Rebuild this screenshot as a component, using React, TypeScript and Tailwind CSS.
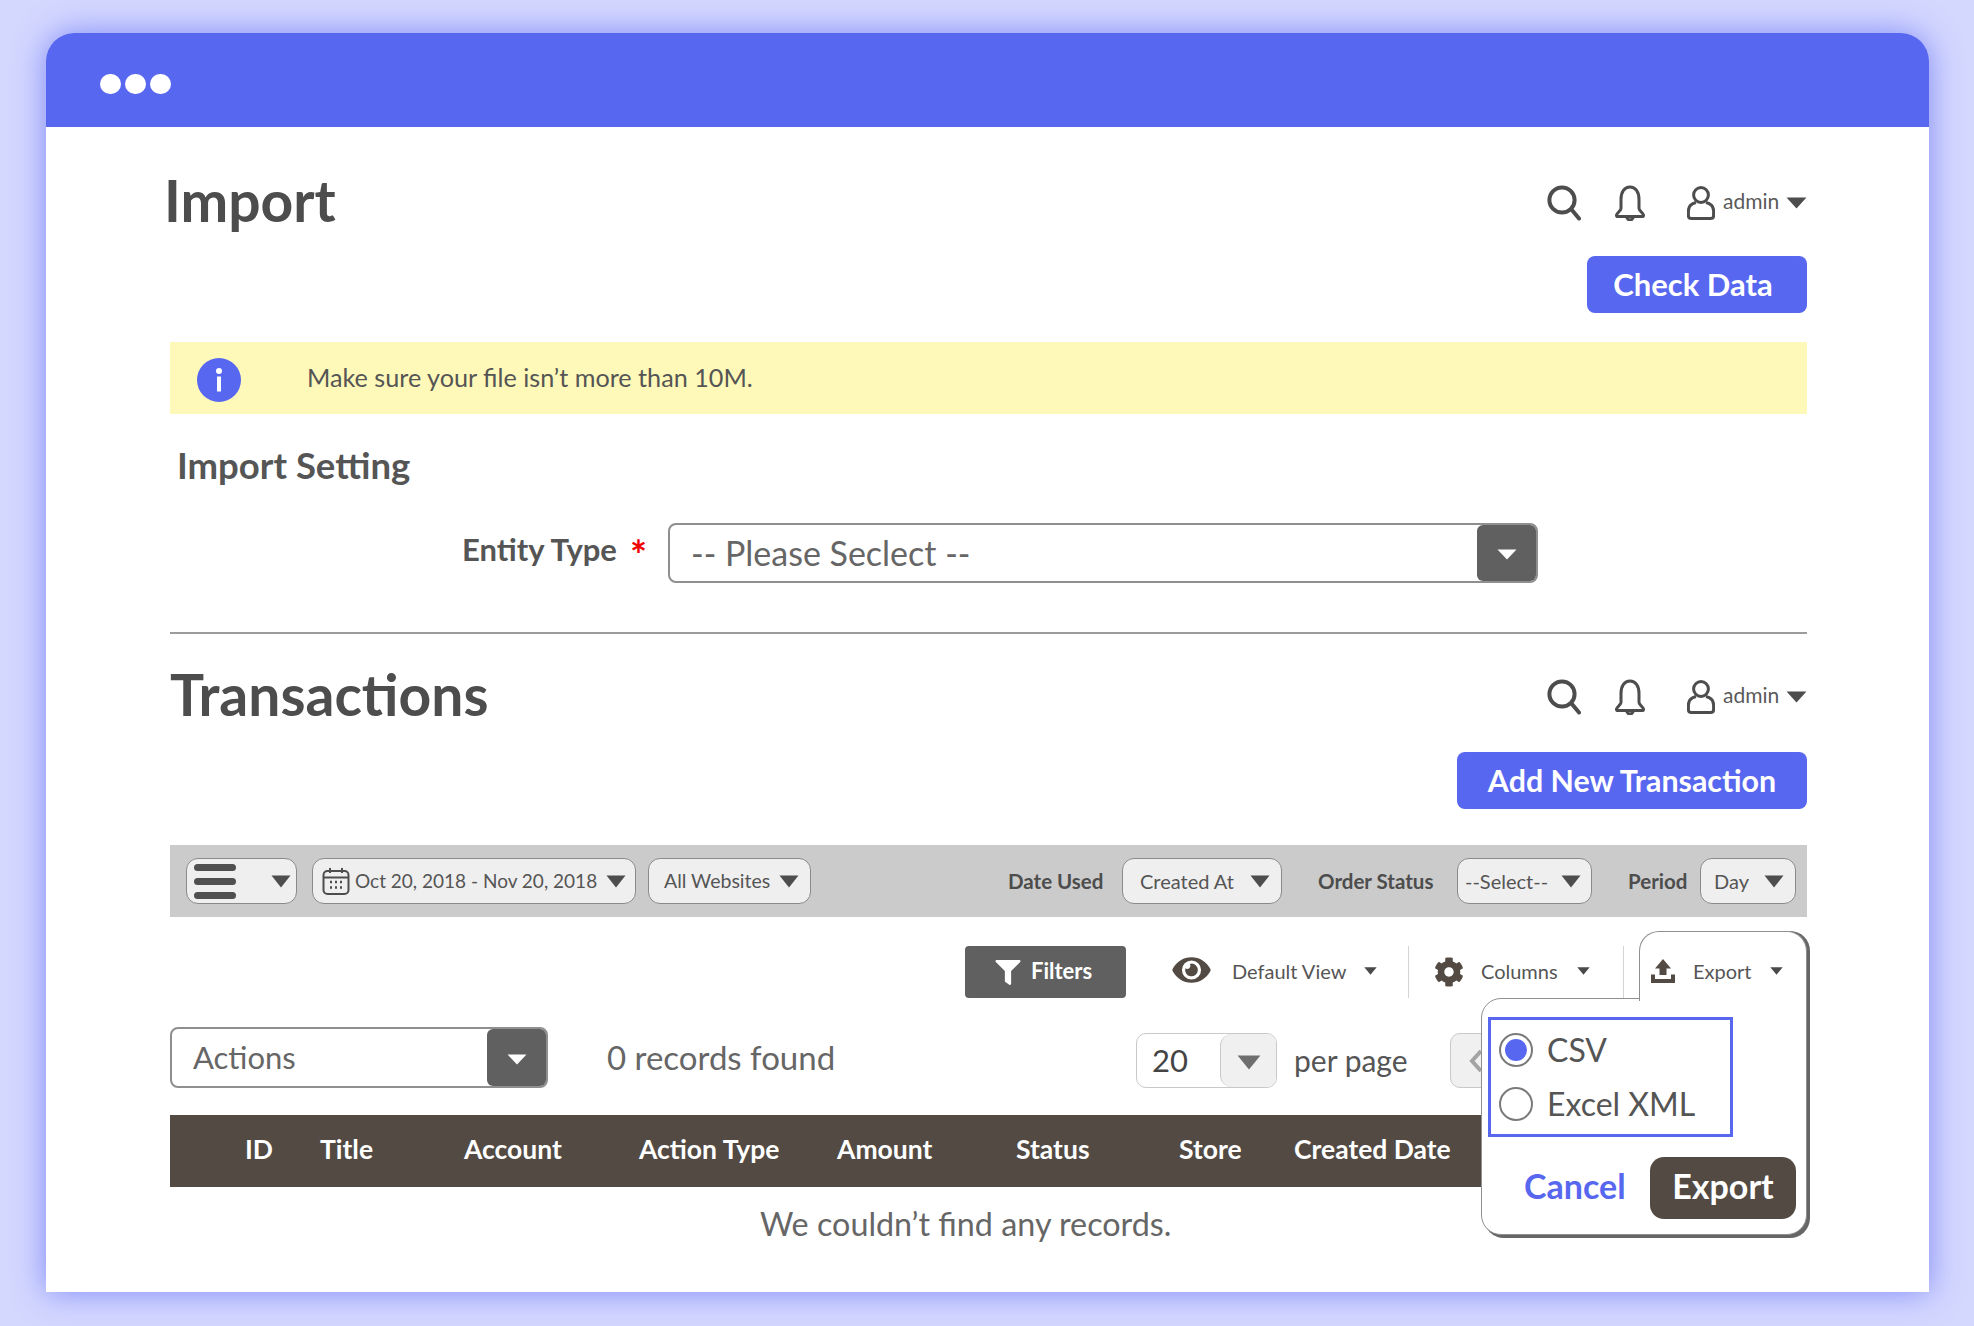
import { FaCog, FaEye, FaFilter } from "react-icons/fa";

function Caret({ className }: { className: string }) {
  return (
    <svg viewBox="0 0 20 13" className={className} fill="currentColor" preserveAspectRatio="none">
      <path d="M0.5 0.5h19L10 12.5z" />
    </svg>
  );
}

function TopIcons() {
  return (
    <div className="flex items-center text-[#4d4d4d]">
      <svg viewBox="0 0 34 36" className="w-[34px] h-[36px]" fill="none" stroke="currentColor" strokeWidth="4" strokeLinecap="round">
        <circle cx="15" cy="15" r="12.600" />
        <path d="M24.500 24.500 32 33.500" />
      </svg>
      <svg viewBox="0 0 32 36" className="w-[32px] h-[36px] ml-[33px]" fill="none" stroke="currentColor" strokeWidth="3" strokeLinejoin="round">
        <path d="M7 14.500C7 7 10.500 2 16 2s9 5 9 12.500v9c0 2 4 4.500 4.500 6.500.2 1-.3 1.500-1.300 1.500H3.800c-1 0-1.500-.5-1.300-1.500C3 28 7 25.500 7 23.500z" />
        <path d="M12.500 31.500c.5 2.500 2 3.500 3.500 3.500s3-1 3.500-3.500" />
      </svg>
      <svg viewBox="0 0 28 34" className="w-[28px] h-[34px] ml-[41px]" fill="none" stroke="currentColor" strokeWidth="3">
        <circle cx="14" cy="9" r="7.400" />
        <path d="M9 16.500C4.500 17.500 1.400 20.500 1.400 25v4.500c0 2 1 3 3 3h19.200c2 0 3-1 3-3V25c0-4.500-3.100-7.500-7.600-8.500" />
      </svg>
      <span className="ml-[8px] mb-[4px] text-[21px] text-[#5a5a5a] w-[63px]">admin</span>
      <Caret className="w-[21px] h-[12px]" />
    </div>
  );
}

function PurpleButton({ label, className }: { label: string; className: string }) {
  return (
    <div className="flex justify-end">
      <button className={`h-[57px] rounded-[8px] bg-[#5867f0] text-white font-bold ${className}`}>{label}</button>
    </div>
  );
}

function DarkSelect({ label, className, text }: { label: string; className: string; text: string }) {
  return (
    <div className={`flex items-stretch rounded-[8px] border-2 border-[#8f8f8f] bg-white overflow-hidden ${className}`}>
      <span className={`flex-1 pl-[21px] flex items-center text-[#666] ${text}`}>{label}</span>
      <span className="w-[59px] bg-[#606060] flex items-center justify-center rounded-l-[6px]">
        <Caret className="w-[20px] h-[11px] text-white mt-[3px]" />
      </span>
    </div>
  );
}

function ToolSelect({ children, className }: { children: React.ReactNode; className: string }) {
  return (
    <div className={`h-[46px] rounded-[12px] border border-[#8a8a8a] bg-[#efefef] flex items-center text-[#555] text-[20px] shrink-0 ${className}`}>
      {children}
    </div>
  );
}

const columns = ["ID", "Title", "Account", "Action Type", "Amount", "Status", "Store", "Created Date"];

function ExportPopup() {
  return (
    <div className="absolute right-0 top-[-15px] w-[326px] h-[304px] z-10 text-[#555]">
      <div className="absolute right-0 top-0 w-[168px] h-[70px] z-20 bg-white rounded-t-[20px] border border-b-0 border-[#8f8f8f] shadow-[3px_0_0_#666] flex items-center pl-[11px] pt-[9px]">
        <svg viewBox="0 0 24 24" className="w-[24px] h-[24px] text-[#524a43] mb-[1px]" fill="currentColor">
          <path d="M12 0 20 9.500H15.500V16H8.500V9.500H4z" />
          <path d="M0 15.500H4V20H20V15.500H24V24H0z" />
        </svg>
        <span className="ml-[18px] text-[20px]">Export</span>
        <Caret className="w-[13px] h-[8px] ml-[18px] text-[#4a4a4a]" />
      </div>
      <div className="absolute left-0 top-[67px] w-[326px] h-[237px] bg-white rounded-[20px] rounded-tr-none border border-[#8f8f8f] shadow-[3px_3px_0_#666] flex flex-col pl-[6px] pt-[18px]">
        <div className="w-[245px] h-[120px] border-[3px] border-[#5867f0] flex flex-col justify-center gap-[20px] pl-[8px] text-[32px]">
          <div className="flex items-center h-[34px]">
            <span className="w-[34px] h-[34px] rounded-full border-2 border-[#7a7a7a] flex items-center justify-center">
              <span className="w-[22px] h-[22px] rounded-full bg-[#5867f0]" />
            </span>
            <span className="ml-[14px]">CSV</span>
          </div>
          <div className="flex items-center h-[34px]">
            <span className="w-[34px] h-[34px] rounded-full border-2 border-[#7a7a7a]" />
            <span className="ml-[14px]">Excel XML</span>
          </div>
        </div>
        <div className="flex items-center mt-[20px]">
          <span className="ml-[36px] w-[126px] mb-[6px] text-[34px] font-bold text-[#5867f0]">Cancel</span>
          <button className="w-[146px] h-[62px] pb-[6px] rounded-[14px] bg-[#524a43] text-white text-[34px] font-bold">Export</button>
        </div>
      </div>
    </div>
  );
}

export default function App() {
  return (
    <div className="w-[1974px] h-[1326px] bg-[#d4d7fe] pt-[33px] pl-[46px] font-[Lato,sans-serif] overflow-hidden">
      <div className="w-[1883px] h-[1259px] bg-white rounded-t-[28px] shadow-[0_0_32px_#7f8af8]">
        <div className="h-[94px] bg-[#5867f0] rounded-t-[28px] flex items-center gap-[4px] pl-[54px] pt-[8px]">
          <span className="w-[21px] h-[20px] rounded-full bg-white" />
          <span className="w-[21px] h-[20px] rounded-full bg-white" />
          <span className="w-[21px] h-[20px] rounded-full bg-white" />
        </div>

        <div className="pl-[124px] pr-[122px] pt-[43px]">
          <div className="h-[66px] flex items-center justify-between">
            <h1 className="text-[57px] font-bold text-[#4d4d4d] -ml-[6px] mb-[5px]">Import</h1>
            <TopIcons />
          </div>
          <div className="mt-[20px]">
            <PurpleButton label="Check Data" className="w-[220px] pr-[8px] text-[31px]" />
          </div>

          <div className="mt-[29px] h-[72px] bg-[#fef9b9] flex items-center pl-[27px] text-[#555]">
            <svg viewBox="0 0 44 44" className="w-[44px] h-[44px] mt-[3px]">
              <circle cx="22" cy="22" r="22" fill="#5867f0" />
              <circle cx="22" cy="13" r="3" fill="#fff" />
              <rect x="20" y="18.500" width="4" height="15" fill="#fff" />
            </svg>
            <span className="ml-[66px] text-[25.2px]">Make sure your file isn’t more than 10M.</span>
          </div>

          <h2 className="mt-[31px] h-[44px] flex items-center ml-[7px] pb-[4px] text-[36.5px] font-bold text-[#555]">Import Setting</h2>

          <div className="mt-[34px] h-[60px] flex items-center">
            <span className="ml-[292px] w-[168px] mb-[7px] text-[31px] font-bold text-[#555]">Entity Type</span>
            <span className="w-[38px] text-[40px] leading-none font-bold text-[#f00000] mt-[3px]">*</span>
            <DarkSelect label="-- Please Seclect --" className="w-[870px] h-[60px]" text="text-[34px] pb-[2px]" />
          </div>

          <div className="mt-[49px] h-[2px] bg-[#9c9c9c]" />

          <div className="mt-[30px] h-[66px] flex items-center justify-between">
            <h1 className="text-[57px] font-bold text-[#4d4d4d] mb-[5px]">Transactions</h1>
            <TopIcons />
          </div>
          <div className="mt-[22px]">
            <PurpleButton label="Add New Transaction" className="w-[350px] text-[30.4px]" />
          </div>

          <div className="mt-[36px] h-[72px] bg-[#cbcbcb] flex items-center pl-[16px] pr-[11px]">
            <ToolSelect className="w-[111px] pl-[7px]">
              <span className="w-[42px] flex flex-col gap-[7px]">
                <span className="h-[7px] rounded-full bg-[#505050]" />
                <span className="h-[7px] rounded-full bg-[#505050]" />
                <span className="h-[7px] rounded-full bg-[#505050]" />
              </span>
              <Caret className="w-[20px] h-[13px] ml-[35px] text-[#4d4d4d]" />
            </ToolSelect>
            <ToolSelect className="w-[324px] ml-[15px] pl-[9px]">
              <svg viewBox="0 0 28 28" className="w-[28px] h-[28px] text-[#4d4d4d]" fill="none" stroke="currentColor" strokeWidth="2">
                <rect x="1.500" y="4" width="25" height="23" rx="4" />
                <path d="M1.500 10.500h25M8 1v5M20 1v5" />
                <path d="M8 15h2M13 15h2M18 15h2M8 20.500h2M13 20.500h2M18 20.500h2" strokeWidth="2.400" />
              </svg>
              <span className="ml-[5px] w-[251px] text-[19px] whitespace-nowrap">Oct 20, 2018 - Nov 20, 2018</span>
              <Caret className="w-[20px] h-[13px] text-[#4d4d4d]" />
            </ToolSelect>
            <ToolSelect className="w-[163px] ml-[12px] pl-[15px]">
              <span className="w-[115px] text-[19.5px]">All Websites</span>
              <Caret className="w-[20px] h-[13px] text-[#4d4d4d]" />
            </ToolSelect>

            <span className="ml-auto w-[114px] text-[20.5px] font-bold text-[#4d4d4d]">Date Used</span>
            <ToolSelect className="w-[160px] pl-[17px]">
              <span className="w-[110px]">Created At</span>
              <Caret className="w-[20px] h-[13px] text-[#4d4d4d]" />
            </ToolSelect>
            <span className="ml-[36px] w-[139px] text-[20.5px] font-bold text-[#4d4d4d]">Order Status</span>
            <ToolSelect className="w-[135px] pl-[7px]">
              <span className="w-[96px]">--Select--</span>
              <Caret className="w-[20px] h-[13px] text-[#4d4d4d]" />
            </ToolSelect>
            <span className="ml-[36px] w-[72px] text-[20.5px] font-bold text-[#4d4d4d]">Period</span>
            <ToolSelect className="w-[96px] pl-[13px]">
              <span className="w-[50px]">Day</span>
              <Caret className="w-[20px] h-[13px] text-[#4d4d4d]" />
            </ToolSelect>
          </div>

          <div className="relative mt-[29px] h-[52px] flex items-center text-[#555] text-[20px]">
            <button className="ml-[795px] w-[161px] h-[52px] rounded-[4px] bg-[#606060] text-white text-[22px] font-bold flex items-center pl-[29px]">
              <FaFilter className="w-[28px] h-[25px]" />
              <span className="ml-[9px] mb-[3px]">Filters</span>
            </button>
            <FaEye className="ml-[46px] w-[39px] h-[34px] text-[#524a43] mb-[5px]" />
            <span className="ml-[21px] w-[132px] mb-[3px]">Default View</span>
            <Caret className="w-[13px] h-[8px] text-[#4a4a4a] mb-[2px]" />
            <span className="ml-[31px] w-px h-[52px] bg-[#d4d4d4]" />
            <FaCog className="ml-[25px] w-[30px] h-[30px] text-[#524a43]" />
            <span className="ml-[17px] w-[96px] mb-[3px]">Columns</span>
            <Caret className="w-[13px] h-[8px] text-[#4a4a4a] mb-[2px]" />
            <span className="ml-[33px] w-px h-[52px] bg-[#d4d4d4]" />
            <ExportPopup />
          </div>

          <div className="mt-[29px] h-[61px] flex items-center">
            <DarkSelect label="Actions" className="w-[378px] h-[61px]" text="text-[31px]" />
            <span className="ml-[59px] w-[228px] whitespace-nowrap text-[33px] text-[#666]">0 records found</span>
            <div className="ml-[301px] mt-[6px] w-[141px] h-[55px] rounded-[10px] border border-[#c9c9c9] flex items-stretch overflow-hidden">
              <span className="flex-1 pl-[15px] flex items-center text-[31px] text-[#444]">20</span>
              <span className="w-[56px] bg-[#f0f0f0] border-l border-[#c9c9c9] rounded-l-[12px] flex items-center justify-center">
                <Caret className="w-[24px] h-[15px] text-[#6e6e6e] mt-[4px]" />
              </span>
            </div>
            <span className="ml-[17px] w-[156px] mt-[6px] text-[30px] text-[#555]">per page</span>
            <div className="mt-[6px] w-[60px] h-[55px] rounded-[10px] border border-[#c9c9c9] bg-[#f0f0f0] flex items-center pl-[18px]">
              <svg viewBox="0 0 14 24" className="w-[14px] h-[24px]" fill="none" stroke="#a3a3a3" strokeWidth="4">
                <path d="M12 2 3 12l9 10" />
              </svg>
            </div>
          </div>

          <div className="mt-[27px] h-[72px] bg-[#524a43] text-white text-[26.5px] font-bold pl-[75px] pb-[3px] grid grid-cols-[75px_144px_175px_198px_179px_163px_115px_1fr] items-center">
            {columns.map((col) => (
              <span key={col} className="whitespace-nowrap">{col}</span>
            ))}
          </div>

          <p className="pt-[13px] pl-[590px] text-[32.3px] text-[#666]">We couldn’t find any records.</p>
        </div>
      </div>
    </div>
  );
}
